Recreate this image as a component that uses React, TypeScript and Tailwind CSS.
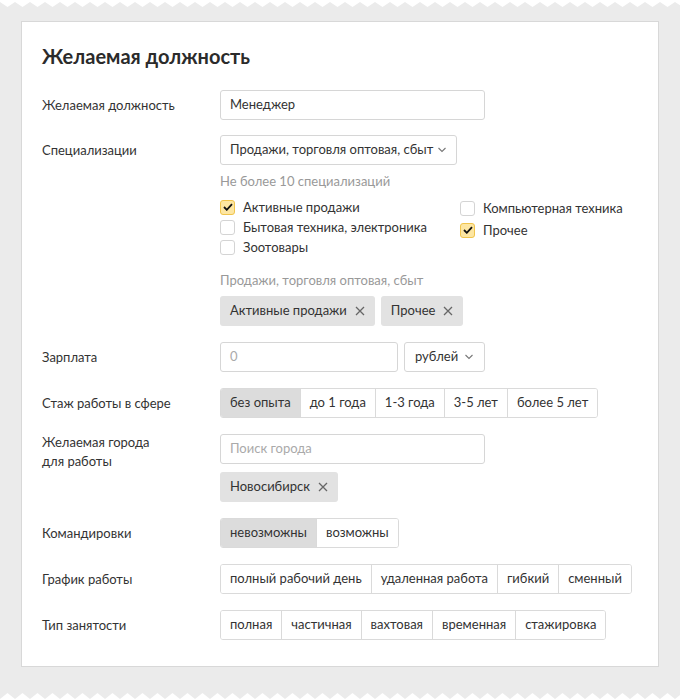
import React from "react";

const font = { fontFamily: "Lato, 'Noto Sans', sans-serif" };

function zig(top: boolean) {
  const period = 15;
  const n = Math.ceil(680 / period) + 1;
  let d = "";
  if (top) {
    d = "M0 0 H690 V2 ";
    for (let i = n; i >= 0; i--) {
      const x = i * period;
      d += `L${x} 2 L${x - period / 2} 7 `;
    }
    d += "L0 2 Z";
  } else {
    d = "M0 10 H690 V8 ";
    for (let i = n; i >= 0; i--) {
      const x = i * period;
      d += `L${x} 9 L${x - period / 2} 3 `;
    }
    d += "L0 9 Z";
  }
  return d;
}

function Chevron() {
  return (
    <svg width="10" height="6" viewBox="0 0 10 6" className="shrink-0">
      <path d="M1.5 1 L5 4.5 L8.5 1" fill="none" stroke="#777" strokeWidth="1.1" />
    </svg>
  );
}

function Cross() {
  return (
    <svg width="10" height="10" viewBox="0 0 10 10" className="shrink-0">
      <path d="M1 1 L9 9 M9 1 L1 9" fill="none" stroke="#666" strokeWidth="1.3" />
    </svg>
  );
}

function Tag({ text }: { text: string }) {
  return (
    <div className="h-[30px] flex items-center gap-[8px] pl-[10px] pr-[10px] bg-[#e2e2e2] rounded-[3px] text-[13px] text-[#333]">
      <span>{text}</span>
      <Cross />
    </div>
  );
}

function Checkbox({ checked, label }: { checked?: boolean; label: string }) {
  return (
    <div className="flex items-center gap-[8px] h-[20px]">
      <div
        className={
          checked
            ? "w-[15px] h-[15px] rounded-[3px] border border-[#f0c44c] bg-[#fde6a2] flex items-center justify-center"
            : "w-[15px] h-[15px] rounded-[3px] border border-[#d4d4d4] bg-white"
        }
      >
        {checked && (
          <svg width="10" height="8" viewBox="0 0 10 8">
            <path d="M1 4 L3.8 6.8 L9 1.2" fill="none" stroke="#111" strokeWidth="1.8" />
          </svg>
        )}
      </div>
      <span className="text-[13px] text-[#333] leading-[20px]">{label}</span>
    </div>
  );
}

function Segmented({ items, active }: { items: string[]; active?: number }) {
  return (
    <div className="flex h-[30px] border border-[#dadada] rounded-[3px] overflow-hidden w-max">
      {items.map((it, i) => (
        <div
          key={it}
          className={
            (i === active ? "bg-[#dcdcdc] " : "bg-white ") +
            (i > 0 ? "border-l border-[#dadada] " : "") +
            "px-[9px] flex items-center text-[13px] text-[#333] whitespace-nowrap"
          }
        >
          {it}
        </div>
      ))}
    </div>
  );
}

function Row({ label, children, className }: { label: React.ReactNode; children: React.ReactNode; className?: string }) {
  return (
    <div className={"flex " + (className ?? "")}>
      <div className="w-[178px] shrink-0 text-[13px] text-[#333] leading-[19px] pt-[6px]">{label}</div>
      <div className="flex-1">{children}</div>
    </div>
  );
}

export default function App() {
  return (
    <div style={font} className="relative w-[680px] h-[700px] bg-[#ebebeb] overflow-hidden pt-[21px] pl-[21px]">
      <svg className="absolute left-0 top-0" width="680" height="10" viewBox="0 0 680 10">
        <path d={zig(true)} fill="#ffffff" />
      </svg>
      <svg className="absolute left-0 bottom-0" width="680" height="10" viewBox="0 0 680 10">
        <path d={zig(false)} fill="#ffffff" />
      </svg>

      <div className="w-[638px] h-[646px] bg-white border border-[#d8d8d8] pl-[20px] pt-[20px]">
        <h1 className="text-[20px] font-bold text-[#2b2b2b] leading-[28px]">Желаемая должность</h1>

        <Row label="Желаемая должность" className="mt-[20px]">
          <div className="w-[265px] h-[30px] border border-[#d6d6d6] rounded-[3px] px-[9px] flex items-center text-[13px] text-[#333]">
            Менеджер
          </div>
        </Row>

        <Row label="Специализации" className="mt-[15px]">
          <div className="w-[237px] h-[30px] border border-[#d6d6d6] rounded-[3px] pl-[9px] pr-[9px] flex items-center justify-between text-[13px] text-[#333]">
            <span>Продажи, торговля оптовая, сбыт</span>
            <Chevron />
          </div>
          <div className="mt-[7px] text-[13px] leading-[18px] text-[#999]">Не более 10 специализаций</div>
          <div className="mt-[7px] flex">
            <div className="w-[240px] flex flex-col">
              <Checkbox checked label="Активные продажи" />
              <Checkbox label="Бытовая техника, электроника" />
              <Checkbox label="Зоотовары" />
            </div>
            <div className="flex flex-col pt-[1px] gap-[2px]">
              <Checkbox label="Компьютерная техника" />
              <Checkbox checked label="Прочее" />
            </div>
          </div>
          <div className="mt-[14px] text-[13px] leading-[18px] text-[#999]">Продажи, торговля оптовая, сбыт</div>
          <div className="mt-[7px] flex gap-[6px]">
            <Tag text="Активные продажи" />
            <Tag text="Прочее" />
          </div>
        </Row>

        <Row label="Зарплата" className="mt-[16px]">
          <div className="flex gap-[6px]">
            <div className="w-[178px] h-[30px] border border-[#d6d6d6] rounded-[3px] px-[9px] flex items-center text-[13px] text-[#aaa]">
              0
            </div>
            <div className="w-[81px] h-[30px] border border-[#d6d6d6] rounded-[3px] pl-[10px] pr-[10px] flex items-center justify-between text-[13px] text-[#333]">
              <span>рублей</span>
              <Chevron />
            </div>
          </div>
        </Row>

        <Row label="Стаж работы в сфере" className="mt-[16px]">
          <Segmented items={["без опыта", "до 1 года", "1-3 года", "3-5 лет", "более 5 лет"]} active={0} />
        </Row>

        <Row
          label={
            <div className="-mt-[7px]">
              Желаемая города
              <br />
              для работы
            </div>
          }
          className="mt-[16px]"
        >
          <div className="w-[265px] h-[30px] border border-[#d6d6d6] rounded-[3px] px-[9px] flex items-center text-[13px] text-[#aaa]">
            Поиск города
          </div>
          <div className="mt-[8px] flex">
            <Tag text="Новосибирск" />
          </div>
        </Row>

        <Row label="Командировки" className="mt-[16px]">
          <Segmented items={["невозможны", "возможны"]} active={0} />
        </Row>

        <Row label="График работы" className="mt-[16px]">
          <Segmented items={["полный рабочий день", "удаленная работа", "гибкий", "сменный"]} />
        </Row>

        <Row label="Тип занятости" className="mt-[16px]">
          <Segmented items={["полная", "частичная", "вахтовая", "временная", "стажировка"]} />
        </Row>
      </div>
    </div>
  );
}
